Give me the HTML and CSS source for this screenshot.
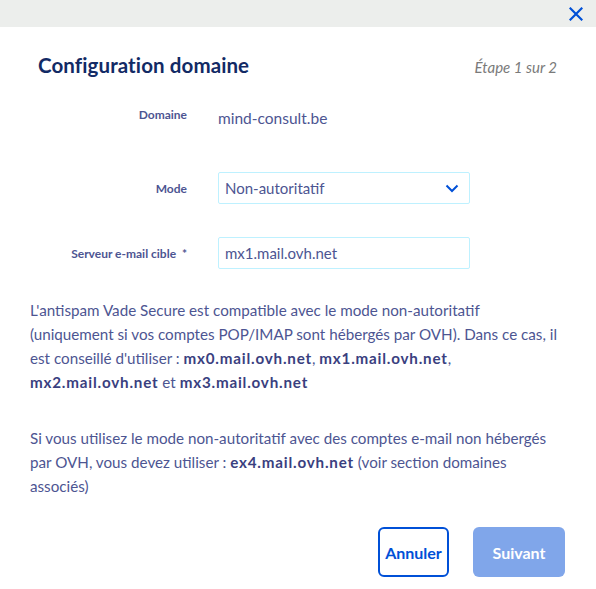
FILE: index.html
```html
<!DOCTYPE html>
<html lang="fr">
<head>
<meta charset="utf-8">
<title>Configuration domaine</title>
<link rel="stylesheet" href="styles.css">
</head>
<body>
<div class="modal">
  <div class="topbar">
    <button class="close" aria-label="Fermer">
      <svg width="14" height="14" viewBox="0 0 14 14"><path d="M1.5 1.5 L12.5 12.5 M12.5 1.5 L1.5 12.5" stroke="#0050d7" stroke-width="2.2" stroke-linecap="square" fill="none"/></svg>
    </button>
  </div>
  <div class="content">
    <div class="header">
      <h1 class="title">Configuration domaine</h1>
      <span class="step">Étape 1 sur 2</span>
    </div>
    <div class="form">
      <div class="row row-domain">
        <span class="label">Domaine</span>
        <span class="value">mind-consult.be</span>
      </div>
      <div class="row row-mode">
        <span class="label">Mode</span>
        <div class="select">
          <span>Non-autoritatif</span>
          <svg width="14" height="9" viewBox="0 0 14 9"><path d="M1.5 1.5 L7 7 L12.5 1.5" stroke="#0050d7" stroke-width="2" fill="none"/></svg>
        </div>
      </div>
      <div class="row row-server">
        <span class="label">Serveur e-mail cible&nbsp; *</span>
        <div class="input">mx1.mail.ovh.net</div>
      </div>
    </div>
    <p class="text">L'antispam Vade Secure est compatible avec le mode non-autoritatif (uniquement si vos comptes POP/IMAP sont hébergés par OVH). Dans ce cas, il est conseillé d'utiliser : <b>mx0.mail.ovh.net</b>, <b>mx1.mail.ovh.net</b>, <b>mx2.mail.ovh.net</b> et <b>mx3.mail.ovh.net</b></p>
    <p class="text">Si vous utilisez le mode non-autoritatif avec des comptes e-mail non hébergés par OVH, vous devez utiliser : <b>ex4.mail.ovh.net</b> (voir section domaines associés)</p>
    <div class="actions">
      <button class="btn btn-secondary">Annuler</button>
      <button class="btn btn-primary" disabled>Suivant</button>
    </div>
  </div>
</div>
</body>
</html>
```

FILE: styles.css
```css
* { box-sizing: border-box; }
html, body { margin: 0; padding: 0; background: #fff; }
body { font-family: "Lato", "Open Sans", sans-serif; color: #4d5592; }

.topbar {
  height: 27px;
  background: #eceeec;
  display: flex;
  justify-content: flex-end;
  align-items: center;
  padding-right: 13px;
}
.close {
  border: 0;
  background: none;
  padding: 0;
  width: 14px;
  height: 14px;
  display: flex;
}

.content { padding: 0 30px 0 30px; }

.header {
  display: flex;
  justify-content: space-between;
  align-items: baseline;
  padding: 26px 0 0 8px;
  height: 77px;
}
.title {
  margin: 0;
  font-size: 20.5px;
  font-weight: 700;
  color: #122a65;
  letter-spacing: 0.1px;
}
.step {
  font-size: 15px;
  font-style: italic;
  color: #7a7a7a;
  margin-right: 9px;
}

.form { display: flex; flex-direction: column; }
.row {
  display: grid;
  grid-template-columns: 157px 252px;
  column-gap: 31px;
  align-items: center;
}
.label {
  text-align: right;
  font-size: 12px;
  font-weight: 700;
  color: #4d5592;
}
.row-domain { height: 30px; margin-top: -1px; }
.row-domain .label { position: relative; top: -4px; }
.value { font-size: 15.5px; }
.row-mode { margin-top: 39px; }
.row-server { margin-top: 33px; }

.select, .input {
  height: 32px;
  border: 1px solid #bef1ff;
  border-radius: 2px;
  font-size: 15px;
  color: #4d5592;
  padding: 0 10px 0 6px;
  display: flex;
  align-items: center;
}
.select { justify-content: space-between; }

.text {
  font-size: 15.2px;
  line-height: 24px;
  margin: 29px 0 0;
}
.text + .text { margin-top: 32px; }
.text b { font-weight: 700; color: #3a3f80; letter-spacing: 0.8px; }

.actions {
  display: flex;
  justify-content: flex-end;
  gap: 24px;
  margin-top: 29px;
  padding-right: 1px;
}
.btn {
  height: 50px;
  border-radius: 6px;
  font-family: inherit;
  font-size: 16px;
  font-weight: 700;
  padding: 0;
}
.btn-secondary {
  width: 71px;
  background: #fff;
  border: 2px solid #0050d7;
  color: #0050d7;
}
.btn-primary {
  width: 92px;
  background: #80a6ea;
  border: 0;
  color: #fff;
}
```
